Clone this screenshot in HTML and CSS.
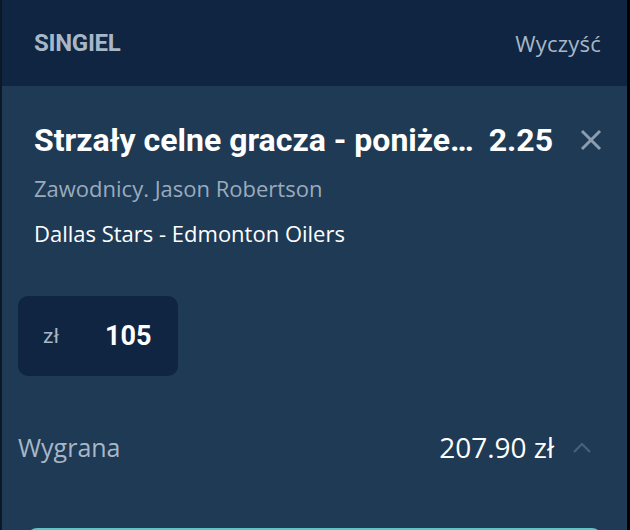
FILE: index.html
```html
<!DOCTYPE html>
<html lang="pl">
<head>
<meta charset="utf-8">
<link rel="stylesheet" href="styles.css">
</head>
<body>
<div class="frame">
  <header class="top">
    <span class="type">SINGIEL</span>
    <span class="clear">Wyczyść</span>
  </header>
  <main class="slip">
    <section class="bet">
      <div class="bet-row">
        <span class="bet-title" title="Strzały celne gracza - poniżej 2.5">Strzały celne gracza - poniże…</span>
        <span class="odds">2.25</span>
        <svg class="close" viewBox="0 0 22 22" width="22" height="22"><path d="M2 2L20 20M20 2L2 20" stroke="#8c9db0" stroke-width="3" stroke-linecap="butt"/></svg>
      </div>
      <div class="market">Zawodnicy. Jason Robertson</div>
      <div class="event">Dallas Stars - Edmonton Oilers</div>
    </section>
    <div class="stake">
      <span class="cur">zł</span>
      <span class="amount">105</span>
    </div>
    <div class="win">
      <span class="win-label">Wygrana</span>
      <span class="win-value">207.90 zł</span>
      <svg class="chev" viewBox="0 0 20 12" width="20" height="12"><path d="M2 10L10 2L18 10" fill="none" stroke="#46617c" stroke-width="2.2"/></svg>
    </div>
    <div class="place"></div>
  </main>
</div>
</body>
</html>
```

FILE: styles.css
```css
* { box-sizing: border-box; }
html, body { margin: 0; padding: 0; }
body {
  width: 630px;
  height: 530px;
  overflow: hidden;
  background: #1f3a55;
}
.frame {
  width: 630px;
  height: 530px;
  border-left: 2px solid #0b1829;
  border-right: 3px solid #000;
  display: flex;
  flex-direction: column;
  overflow: hidden;
}
.top {
  height: 86px;
  flex: none;
  background: #0f2541;
  display: flex;
  align-items: center;
  justify-content: space-between;
  padding: 0 26px 0 32px;
}
.type {
  font-family: Roboto, sans-serif;
  font-weight: 700;
  font-size: 24px;
  color: #a8b7c7;
  letter-spacing: -0.3px;
}
.clear {
  font-family: "Open Sans", sans-serif;
  font-size: 22px;
  color: #a8b7c7;
  letter-spacing: 0.2px;
}
.slip {
  flex: 1;
  background: #1f3a55;
  padding: 0 0 0 16px;
  display: flex;
  flex-direction: column;
}
.bet {
  padding: 34px 25px 0 16px;
}
.bet-row {
  display: flex;
  align-items: center;
  height: 40px;
}
.bet-title {
  flex: 1;
  min-width: 0;
  white-space: nowrap;
  font-family: Roboto, sans-serif;
  font-weight: 700;
  font-size: 32px;
  letter-spacing: 0;
  color: #ffffff;
}
.odds {
  font-family: Roboto, sans-serif;
  font-weight: 700;
  font-size: 32px;
  color: #ffffff;
  margin-left: 10px;
}
.close {
  margin-left: 27px;
  flex: none;
}
.market {
  margin-top: 13px;
  font-family: "Open Sans", sans-serif;
  font-size: 22px;
  line-height: 30px;
  color: #9aabbd;
}
.event {
  margin-top: 15px;
  font-family: "Open Sans", sans-serif;
  font-size: 22px;
  line-height: 30px;
  color: #ffffff;
}
.stake {
  margin-top: 48px;
  width: 160px;
  height: 80px;
  border-radius: 10px;
  background: #0f2541;
  display: flex;
  align-items: center;
  padding-left: 25px;
}
.cur {
  font-family: Roboto, sans-serif;
  font-size: 21px;
  color: #a8b7c7;
}
.amount {
  margin-left: 46px;
  font-family: Roboto, sans-serif;
  font-weight: 700;
  font-size: 27px;
  color: #ffffff;
}
.win {
  margin-top: 53px;
  display: flex;
  align-items: center;
  height: 36px;
  padding-right: 35px;
}
.win-label {
  flex: 1;
  font-family: "Open Sans", sans-serif;
  font-size: 25px;
  color: #a8b7c7;
}
.win-value {
  font-family: "Open Sans", sans-serif;
  font-size: 28px;
  color: #ffffff;
}
.chev {
  margin-left: 18px;
  margin-top: 2px;
}
.place {
  margin-top: 63px;
  margin-left: 9px;
  margin-right: 25px;
  height: 40px;
  border-radius: 10px;
  background: #5cc4c2;
  flex: none;
}
```
